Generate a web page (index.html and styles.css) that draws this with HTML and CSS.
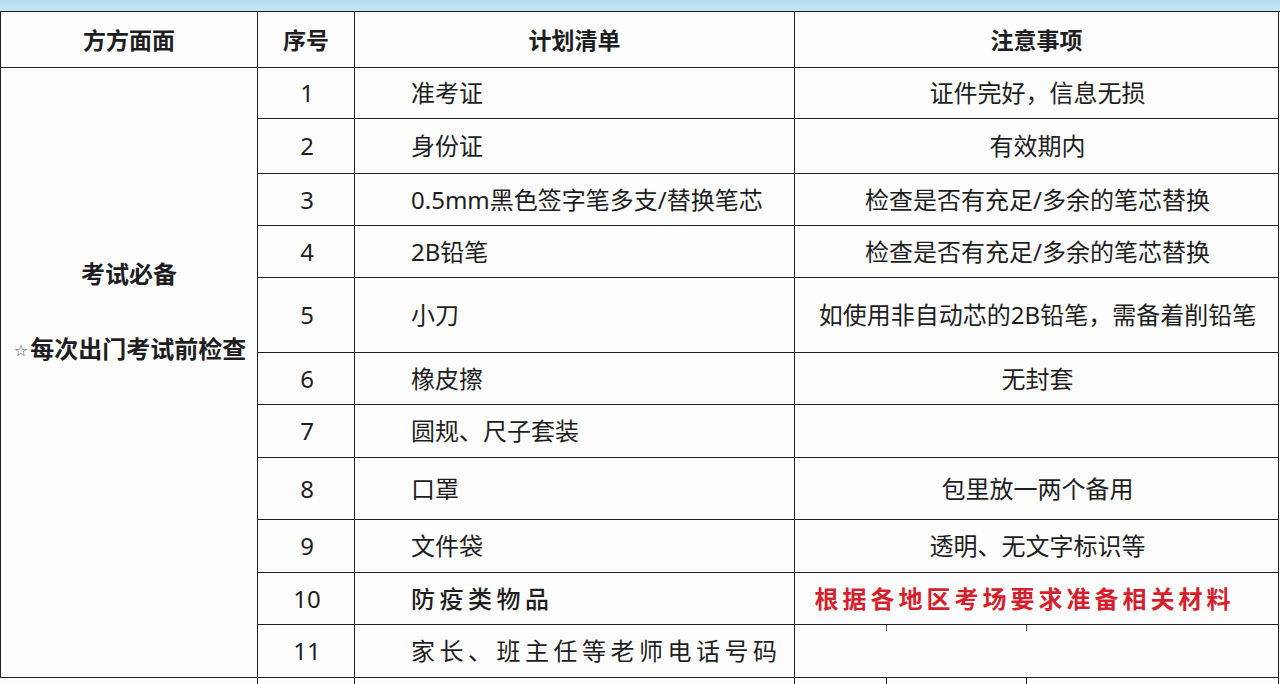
FILE: index.html
```html
<!DOCTYPE html>
<html lang="zh-CN">
<head>
<meta charset="utf-8">
<title>考试必备清单</title>
<link rel="stylesheet" href="styles.css">
</head>
<body>
<div class="band"></div>
<div class="sheet">
  <div class="cell head c1">方方面面</div>
  <div class="cell head">序号</div>
  <div class="cell head">计划清单</div>
  <div class="cell head">注意事项</div>

  <div class="cell c1 merged">
    <div class="m1">考试必备</div>
    <div class="m2"><span class="star">☆</span>每次出门考试前检查</div>
  </div>

  <div class="cell num">1</div><div class="cell item">准考证</div><div class="cell note">证件完好，信息无损</div>
  <div class="cell num">2</div><div class="cell item">身份证</div><div class="cell note">有效期内</div>
  <div class="cell num">3</div><div class="cell item">0.5mm黑色签字笔多支/替换笔芯</div><div class="cell note">检查是否有充足/多余的笔芯替换</div>
  <div class="cell num">4</div><div class="cell item">2B铅笔</div><div class="cell note">检查是否有充足/多余的笔芯替换</div>
  <div class="cell num">5</div><div class="cell item">小刀</div><div class="cell note">如使用非自动芯的2B铅笔，需备着削铅笔</div>
  <div class="cell num">6</div><div class="cell item">橡皮擦</div><div class="cell note">无封套</div>
  <div class="cell num">7</div><div class="cell item">圆规、尺子套装</div><div class="cell note"></div>
  <div class="cell num">8</div><div class="cell item">口罩</div><div class="cell note">包里放一两个备用</div>
  <div class="cell num">9</div><div class="cell item">文件袋</div><div class="cell note">透明、无文字标识等</div>
  <div class="cell num">10</div><div class="cell item wide strong">防疫类物品</div><div class="cell note red">根据各地区考场要求准备相关材料</div>
  <div class="cell num">11</div><div class="cell item wide">家长、班主任等老师电话号码</div><div class="cell note stubs"></div>

  <div class="cell tail"></div>
  <div class="cell tail"></div>
  <div class="cell tail"></div>
  <div class="cell tail split">
    <div class="part p1"></div>
    <div class="part p2"></div>
    <div class="part p3"></div>
  </div>
</div>
</body>
</html>
```

FILE: styles.css
```css
html, body {
  margin: 0;
  padding: 0;
  background: #fdfdfd;
}
body {
  width: 1280px;
  height: 684px;
  overflow: hidden;
  font-family: "Noto Sans", "Noto Sans CJK SC", sans-serif;
  color: #1d1d22;
}
.band {
  height: 11px;
  background: linear-gradient(#b6dbee, #c4e4f4);
}
.sheet {
  display: grid;
  grid-template-columns: 258px 97px 440px 484px;
  grid-template-rows: 56px 51px 55px 52px 52px 75px 52px 53px 62px 53px 52px 53px 6px;
  border-top: 1px solid #1f1f1f;
}
.cell {
  box-sizing: border-box;
  border-right: 1px solid #1f1f1f;
  border-bottom: 1px solid #1f1f1f;
  display: flex;
  align-items: center;
  justify-content: center;
  font-size: 24px;
  line-height: 30px;
  white-space: nowrap;
}
.tail {
  border-bottom: none;
}
.c1 {
  border-left: 1px solid #1f1f1f;
}
.head {
  font-weight: 700;
  font-size: 23px;
}
.merged {
  grid-column: 1;
  grid-row: 2 / span 11;
  flex-direction: column;
  justify-content: flex-start;
  padding-top: 191px;
  font-weight: 700;
}
.m2 {
  margin-top: 45px;
  margin-left: 2px;
}
.star {
  font-family: "DejaVu Sans", sans-serif;
  font-weight: 400;
  font-size: 16px;
  color: #555;
  margin-right: 2px;
  vertical-align: 2px;
}
.num {
  grid-column: 2;
  padding-left: 2px;
}
.item {
  justify-content: flex-start;
  padding-left: 56px;
}
.wide {
  letter-spacing: 4.5px;
}
.strong {
  font-weight: 500;
}
.note {
  padding-left: 2px;
}
.red {
  color: #d61f2c;
  font-weight: 700;
  letter-spacing: 4px;
  padding-right: 26px;
}
.stubs {
  background-image: linear-gradient(#555, #555), linear-gradient(#555, #555);
  background-size: 1px 6px, 1px 6px;
  background-position: 91px 0, 231px 0;
  background-repeat: no-repeat;
}
.split {
  justify-content: flex-start;
  align-items: stretch;
}
.part {
  box-sizing: border-box;
}
.p1 {
  width: 92px;
  border-right: 1px solid #1f1f1f;
}
.p2 {
  width: 140px;
  border-right: 1px solid #1f1f1f;
}
.p3 {
  flex: 1;
}
```
